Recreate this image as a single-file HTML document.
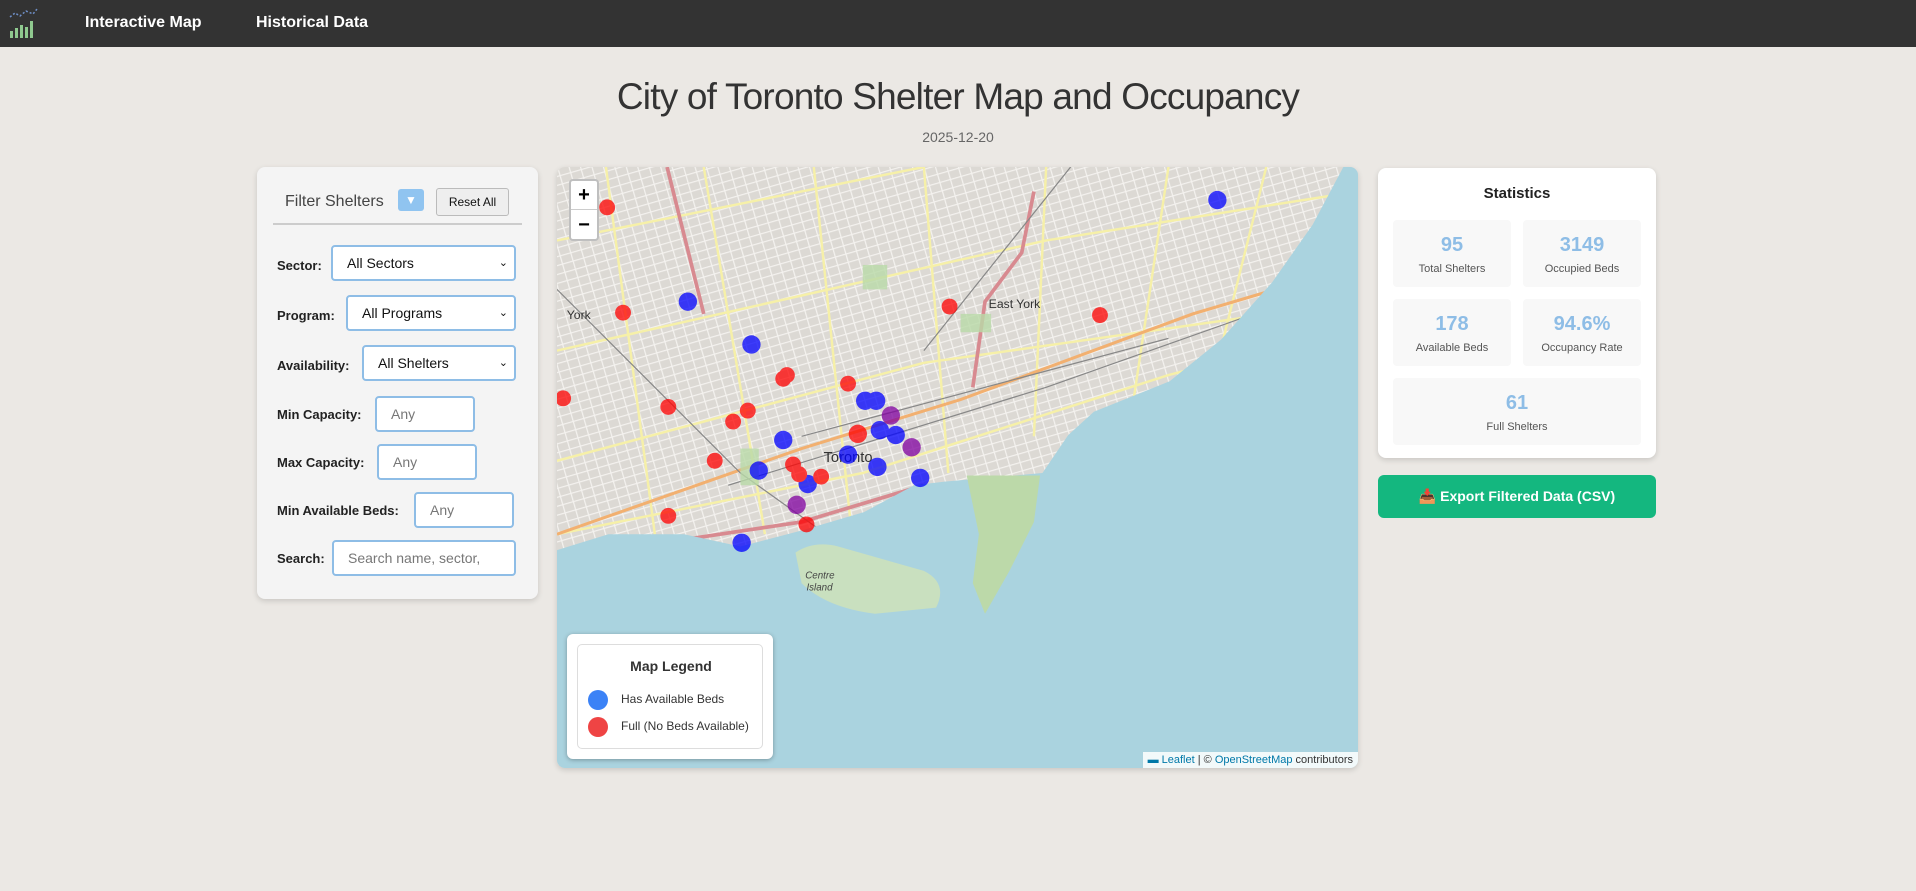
<!DOCTYPE html>
<html><head><meta charset="utf-8"><style>
*{box-sizing:border-box;margin:0;padding:0}
body{width:1916px;height:891px;background:#ebe8e4;font-family:"Liberation Sans",sans-serif;position:relative;overflow:hidden;color:#333}
.nav{position:absolute;left:0;top:0;width:1916px;height:47px;background:#333}
.nav a{position:absolute;top:14px;color:#fff;font-weight:bold;font-size:16px}
h1{position:absolute;top:76px;left:0;width:1916px;text-align:center;font-weight:300;font-size:37px;color:#333;letter-spacing:-0.8px}
.date{position:absolute;top:129px;left:0;width:1916px;text-align:center;font-size:14px;color:#666}
.panel{position:absolute;left:257px;top:167px;width:281px;height:432px;background:#f4f4f4;border-radius:8px;box-shadow:0 2px 6px rgba(0,0,0,.15)}
.ph{position:absolute;left:28px;top:26px;font-size:16px;color:#444}
.tog{position:absolute;left:141px;top:22px;width:26px;height:22px;background:#90c4f0;border-radius:3px;color:#fff;text-align:center;font-size:12px;line-height:22px}
.reset{position:absolute;left:179px;top:21px;width:73px;height:28px;border:1px solid #bbb;border-radius:3px;background:#eee;font-size:12px;text-align:center;line-height:26px;color:#111}
.hr{position:absolute;left:16px;top:56px;width:249px;height:2px;background:#ccc}
.lab{position:absolute;left:20px;font-weight:bold;font-size:13px;color:#222}
.inp{position:absolute;height:36px;border:2px solid #8ebde6;border-radius:4px;background:#fff;font-size:14px;padding-left:14px;line-height:32px;color:#111}
.inp.ph2{color:#777}
.inp .ch{position:absolute;right:6px;top:0;font-size:11px}
.map{position:absolute;left:557px;top:167px;width:801px;height:601px;border-radius:8px;overflow:hidden;box-shadow:0 2px 6px rgba(0,0,0,.15)}
.zoom{position:absolute;left:12px;top:12px;width:30px;height:62px;background:#fff;border:2px solid rgba(0,0,0,.25);border-radius:4px;font-size:20px;font-weight:bold;text-align:center;color:#000}
.legend{position:absolute;left:10px;top:467px;width:206px;height:125px;background:#fff;border-radius:6px;box-shadow:0 1px 5px rgba(0,0,0,.3)}
.legend .in{position:absolute;left:10px;top:10px;width:186px;height:105px;border:1px solid #ddd;border-radius:5px}
.dot{position:absolute;width:20px;height:20px;border-radius:50%}
.attr{position:absolute;right:0;bottom:0;background:rgba(255,255,255,.85);font-size:11px;padding:2px 5px;color:#333}
.attr span{color:#0078a8}
.stats{position:absolute;left:1378px;top:168px;width:278px;height:290px;background:#fff;border-radius:8px;box-shadow:0 2px 6px rgba(0,0,0,.15)}
.st{position:absolute;background:#f8f8f8;border-radius:4px;text-align:center}
.st b{display:block;color:#8ebde6;font-size:20px;margin-top:14px}
.st span{display:block;font-size:11px;color:#555;margin-top:6px}
.exp{position:absolute;left:1378px;top:475px;width:278px;height:43px;background:#14b77f;border-radius:6px;color:#fff;font-weight:bold;font-size:14px;text-align:center;line-height:43px}
</style></head><body>
<div class="nav">
<svg style="position:absolute;left:8px;top:7px" width="30" height="32" viewBox="0 0 30 32"><polyline points="2,10 7,6 12,9 18,4 25,7 29,2" fill="none" stroke="#6f8fc7" stroke-width="1.5" stroke-dasharray="2 2"/><g fill="#8fc98f"><rect x="2" y="24" width="3" height="7"/><rect x="7" y="21" width="3" height="10"/><rect x="12" y="18" width="3" height="13"/><rect x="17" y="20" width="3" height="11"/><rect x="22" y="14" width="3" height="17"/></g></svg>
<a style="left:85px">Interactive Map</a><a style="left:256px">Historical Data</a></div>
<h1>City of Toronto Shelter Map and Occupancy</h1>
<div class="date">2025-12-20</div>
<div class="panel">
<div class="ph">Filter Shelters</div><div class="tog">▼</div><div class="reset">Reset All</div><div class="hr"></div>
<div class="lab" style="top:91px">Sector:</div><div class="inp" style="left:74px;top:78px;width:185px">All Sectors<span class="ch">&#8964;</span></div>
<div class="lab" style="top:141px">Program:</div><div class="inp" style="left:89px;top:128px;width:170px">All Programs<span class="ch">&#8964;</span></div>
<div class="lab" style="top:191px">Availability:</div><div class="inp" style="left:105px;top:178px;width:154px">All Shelters<span class="ch">&#8964;</span></div>
<div class="lab" style="top:240px">Min Capacity:</div><div class="inp ph2" style="left:118px;top:229px;width:100px">Any</div>
<div class="lab" style="top:288px">Max Capacity:</div><div class="inp ph2" style="left:120px;top:277px;width:100px">Any</div>
<div class="lab" style="top:336px">Min Available Beds:</div><div class="inp ph2" style="left:157px;top:325px;width:100px">Any</div>
<div class="lab" style="top:384px">Search:</div><div class="inp ph2" style="left:75px;top:373px;width:184px">Search name, sector,</div>
</div>
<div class="map">
<svg width="801" height="601" viewBox="0 0 655 491" preserveAspectRatio="none" style="position:absolute;left:0;top:0">
<defs><pattern id="g" width="9" height="7" patternUnits="userSpaceOnUse" patternTransform="rotate(-16)"><rect width="9" height="7" fill="#dcd9d4"/><path d="M0 0.5H9M0.5 0V7" stroke="#f4f2ef" stroke-width="1"/></pattern></defs>
<rect width="655" height="491" fill="url(#g)"/>
<g stroke="#f6f0a8" stroke-width="2" fill="none">
<path d="M0 60 L300 0 M0 150 L400 60 L655 20 M0 240 L300 160 L655 110 M0 300 L250 250 L500 170 L655 130 M40 0 L80 300 M120 0 L170 300 M210 0 L240 290 M300 0 L320 250 M400 0 L390 220 M500 0 L470 200 M580 0 L540 160"/>
</g>
<g stroke="#f2b070" stroke-width="2.5" fill="none"><path d="M0 300 L200 230 L330 190 L520 120 L655 80"/></g>
<g stroke="#d88a90" stroke-width="3" fill="none"><path d="M90 0 L120 120 M0 320 L100 305 L200 290 L300 260 M390 20 L380 70 L350 110 L340 180"/></g>
<g stroke="#888" stroke-width="1" fill="none"><path d="M0 100 L150 250 L220 300 M140 260 L400 180 L655 90 M300 150 L420 0 M200 220 L500 140"/></g>
<g fill="#b9d9a8" opacity=".8"><rect x="150" y="230" width="15" height="30"/><rect x="250" y="80" width="20" height="20"/><rect x="330" y="120" width="25" height="15"/><rect x="580" y="100" width="20" height="30"/></g>
<path d="M0 313 L42 300 L104 300 L150 310 L200 297 L251 282 L292 260 L317 257 L397 250 L418 219 L439 200 L501 175 L543 141 L585 94 L618 47 L643 0 L655 0 L655 491 L0 491 Z" fill="#aad3df"/>
<path d="M195 315 Q210 305 230 310 L300 330 Q320 340 310 360 L260 365 Q220 360 200 340 Z" fill="#c9e0bf"/>
<path d="M335 252 L395 252 L390 290 L370 330 L350 365 L340 340 L345 300 Z" fill="#bcd9a9"/>
<text x="8" y="124" font-size="10" fill="#333" font-family="Liberation Sans">York</text>
<text x="353" y="115" font-size="10" fill="#333" font-family="Liberation Sans">East York</text>
<text x="218" y="241" font-size="12" fill="#333" font-family="Liberation Sans">Toronto</text>
<text x="203" y="336" font-size="8" font-style="italic" fill="#444" font-family="Liberation Sans">Centre</text>
<text x="204" y="346" font-size="8" font-style="italic" fill="#444" font-family="Liberation Sans">Island</text>
<g opacity=".75">
<g fill="#0000ff">
<circle cx="107" cy="110" r="7.5"/><circle cx="159" cy="145" r="7.5"/><circle cx="185" cy="223" r="7.5"/><circle cx="165" cy="248" r="7.5"/><circle cx="205" cy="259" r="7.5"/><circle cx="252" cy="191" r="7.5"/><circle cx="261" cy="191" r="7.5"/><circle cx="238" cy="235" r="7.5"/><circle cx="262" cy="245" r="7.5"/><circle cx="277" cy="219" r="7.5"/><circle cx="264" cy="215" r="7.5"/><circle cx="297" cy="254" r="7.5"/><circle cx="540" cy="27" r="7.5"/><circle cx="151" cy="307" r="7.5"/>
</g>
<g fill="#ff0000">
<circle cx="41" cy="33" r="6.5"/><circle cx="54" cy="119" r="6.5"/><circle cx="321" cy="114" r="6.5"/><circle cx="444" cy="121" r="6.5"/><circle cx="188" cy="170" r="6.5"/><circle cx="185" cy="173" r="6.5"/><circle cx="5" cy="189" r="6.5"/><circle cx="91" cy="196" r="6.5"/><circle cx="156" cy="199" r="6.5"/><circle cx="144" cy="208" r="6.5"/><circle cx="238" cy="177" r="6.5"/><circle cx="129" cy="240" r="6.5"/><circle cx="193" cy="243" r="6.5"/><circle cx="198" cy="251" r="6.5"/><circle cx="216" cy="253" r="6.5"/><circle cx="246" cy="218" r="7.5"/><circle cx="91" cy="285" r="6.5"/><circle cx="204" cy="292" r="6.5"/>
</g>
<g fill="#8000a0"><circle cx="196" cy="276" r="7.5"/><circle cx="290" cy="229" r="7.5"/><circle cx="273" cy="203" r="7.5"/></g>
</g>
</svg>
<div class="zoom"><div style="height:29px;line-height:28px;border-bottom:1px solid #ccc">+</div><div style="line-height:30px">−</div></div>
<div class="legend"><div class="in">
<div style="position:absolute;left:0;width:186px;top:13px;text-align:center;font-weight:bold;font-size:14px">Map Legend</div>
<div class="dot" style="left:10px;top:45px;background:#3b82f6"></div><div style="position:absolute;left:43px;top:47px;font-size:12px">Has Available Beds</div>
<div class="dot" style="left:10px;top:72px;background:#ef4444"></div><div style="position:absolute;left:43px;top:74px;font-size:12px">Full (No Beds Available)</div>
</div></div>
<div class="attr"><span>▬ Leaflet</span> | © <span>OpenStreetMap</span> contributors</div>
</div>
<div class="stats">
<div style="position:absolute;top:17px;width:278px;text-align:center;font-weight:bold;font-size:15px;color:#222">Statistics</div>
<div class="st" style="left:15px;top:52px;width:118px;height:67px"><b>95</b><span>Total Shelters</span></div>
<div class="st" style="left:145px;top:52px;width:118px;height:67px"><b>3149</b><span>Occupied Beds</span></div>
<div class="st" style="left:15px;top:131px;width:118px;height:67px"><b>178</b><span>Available Beds</span></div>
<div class="st" style="left:145px;top:131px;width:118px;height:67px"><b>94.6%</b><span>Occupancy Rate</span></div>
<div class="st" style="left:15px;top:210px;width:248px;height:67px"><b>61</b><span>Full Shelters</span></div>
</div>
<div class="exp">📥 Export Filtered Data (CSV)</div>
</body></html>
